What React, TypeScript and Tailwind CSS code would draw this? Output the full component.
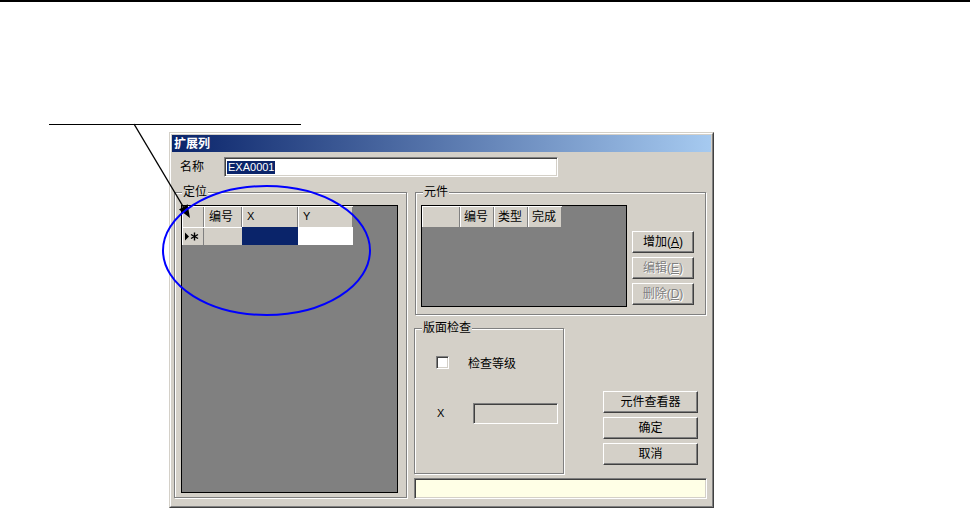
import React from "react";

const FONT = "font-['Liberation_Sans','Noto_Sans_CJK_SC',sans-serif]";

function Btn({
  children,
  className = "",
  disabled = false,
}: {
  children: React.ReactNode;
  className?: string;
  disabled?: boolean;
}) {
  return (
    <div
      className={`flex items-center justify-center h-[22px] bg-[#d4d0c8] border border-t-white border-l-white border-r-[#404040] border-b-[#404040] shadow-[inset_-1px_-1px_0_#808080] text-[12px] leading-none ${
        disabled ? "text-[#808080] [text-shadow:1px_1px_0_#fff]" : "text-black"
      } ${className}`}
    >
      {children}
    </div>
  );
}

function Group({
  label,
  className = "",
  children,
}: {
  label: string;
  className?: string;
  children?: React.ReactNode;
}) {
  return (
    <div
      className={`relative border border-[#808080] shadow-[inset_1px_1px_0_#fff,1px_1px_0_#fff] ${className}`}
    >
      <span className="absolute -top-[8px] left-[7px] bg-[#d4d0c8] px-[1px] text-[12px] leading-[14px] text-black">
        {label}
      </span>
      {children}
    </div>
  );
}

function HeadCell({
  w,
  children,
  pl = "pl-[5px]",
}: {
  w: string;
  children?: React.ReactNode;
  pl?: string;
}) {
  return (
    <div
      className={`${w} h-full flex items-center ${pl} bg-[#d4d0c8] shadow-[inset_1px_1px_0_#fff,inset_-1px_0_0_#808080] text-[12px] leading-none text-black`}
    >
      {children}
    </div>
  );
}

function RowMarker() {
  return (
    <svg width="14" height="9" viewBox="0 0 14 9">
      <polygon points="0,0.5 4,4.5 0,8.5" fill="#000" />
      <g stroke="#000" strokeWidth="1.4">
        <line x1="9.5" y1="0.5" x2="9.5" y2="8.5" />
        <line x1="6" y1="2.5" x2="13" y2="6.5" />
        <line x1="6" y1="6.5" x2="13" y2="2.5" />
      </g>
    </svg>
  );
}

const sunken =
  "border border-t-[#808080] border-l-[#808080] border-r-white border-b-white shadow-[inset_1px_1px_0_#404040,inset_-1px_-1px_0_#d4d0c8]";

export default function App() {
  return (
    <div className={`relative w-[970px] h-[508px] bg-white overflow-hidden ${FONT}`}>
      <div className="h-[2px] bg-black" />

      {/* Dialog */}
      <div className="ml-[169px] mt-[130px] w-[545px] h-[376px] border border-t-[#d4d0c8] border-l-[#d4d0c8] border-r-[#404040] border-b-[#404040] bg-[#d4d0c8]">
        <div className="h-full border border-t-white border-l-white border-r-[#808080] border-b-[#808080] p-[1px] flex flex-col">
          {/* Title bar */}
          <div className="h-[17px] flex items-center pl-[2px] bg-[linear-gradient(to_right,#0a246a,#a6caf0)]">
            <span className="text-white font-bold text-[12px] leading-none">扩展列</span>
          </div>

          {/* Name row */}
          <div className="mt-[5px] h-[20px] flex items-center pl-[8px]">
            <span className="w-[44px] text-[12px] leading-none text-black">名称</span>
            <div className={`w-[334px] h-[20px] bg-white ${sunken} flex items-center pl-[2px]`}>
              <span className="bg-[#0a246a] text-white text-[11px] leading-[13px] px-[1px]">EXA0001</span>
            </div>
          </div>

          {/* Main */}
          <div className="mt-[15px] flex items-start">
            {/* 定位 */}
            <Group label="定位" className="ml-[2px] w-[233px] h-[306px]">
              <div className="mt-[12px] ml-[6px] w-[217px] h-[288px] border border-black bg-[#808080]">
                <div className="flex h-[21px]">
                  <HeadCell w="w-[22px]" />
                  <HeadCell w="w-[38px]">编号</HeadCell>
                  <HeadCell w="w-[56px]">
                    <span className="text-[11px]">X</span>
                  </HeadCell>
                  <HeadCell w="w-[55px]">
                    <span className="text-[11px]">Y</span>
                  </HeadCell>
                </div>
                <div className="flex h-[18px]">
                  <div className="w-[22px] h-full flex items-center pl-[3px] bg-[#d4d0c8] shadow-[inset_1px_1px_0_#fff,inset_-1px_0_0_#808080]">
                    <RowMarker />
                  </div>
                  <div className="w-[38px] h-full bg-[#d4d0c8] shadow-[inset_0_1px_0_#fff]" />
                  <div className="w-[56px] h-full bg-[#0a246a]" />
                  <div className="w-[55px] h-full bg-white" />
                </div>
              </div>
            </Group>

            {/* Right column */}
            <div className="ml-[7px] w-[293px] flex flex-col">
              <Group label="元件" className="ml-[1px] w-[291px] h-[123px]">
                <div className="flex items-start">
                  <div className="mt-[12px] ml-[5px] w-[206px] h-[102px] border border-black bg-[#808080]">
                    <div className="flex h-[21px]">
                      <HeadCell w="w-[38px]" />
                      <HeadCell w="w-[34px]" pl="pl-[4px]">编号</HeadCell>
                      <HeadCell w="w-[34px]" pl="pl-[4px]">类型</HeadCell>
                      <HeadCell w="w-[34px]" pl="pl-[4px]">完成</HeadCell>
                    </div>
                  </div>
                  <div className="ml-[5px] mt-[38px] w-[62px] flex flex-col gap-[4px]">
                    <Btn>
                      增加(<span className="underline">A</span>)
                    </Btn>
                    <Btn disabled>
                      编辑(<span className="underline">E</span>)
                    </Btn>
                    <Btn disabled>
                      删除(<span className="underline">D</span>)
                    </Btn>
                  </div>
                </div>
              </Group>

              <div className="mt-[13px] flex items-start">
                <Group label="版面检查" className="w-[150px] h-[146px]">
                  <div className="mt-[25px] ml-[21px] flex items-center">
                    <div className={`w-[13px] h-[13px] bg-white ${sunken}`} />
                    <span className="ml-[19px] mt-[4px] text-[12px] leading-none text-black">检查等级</span>
                  </div>
                  <div className="mt-[33px] ml-[22px] flex items-center">
                    <span className="w-[36px] text-[11px] leading-none text-black">X</span>
                    <div className={`w-[85px] h-[21px] bg-[#d4d0c8] ${sunken}`} />
                  </div>
                </Group>
                <div className="ml-[39px] mt-[63px] w-[95px] flex flex-col gap-[4px]">
                  <Btn>元件查看器</Btn>
                  <Btn>确定</Btn>
                  <Btn>取消</Btn>
                </div>
              </div>

              <div className={`mt-[4px] w-[293px] h-[21px] bg-[#ffffe6] ${sunken}`} />
            </div>
          </div>
        </div>
      </div>

      {/* Annotation overlay */}
      <svg
        className="absolute left-0 top-0 pointer-events-none"
        width="970"
        height="508"
        viewBox="0 0 970 508"
      >
        <line x1="49" y1="124.5" x2="301" y2="124.5" stroke="#000" strokeWidth="1.2" />
        <line x1="134" y1="124" x2="184" y2="208" stroke="#000" strokeWidth="1.4" />
        <polygon points="190,218 187.6,204.2 179,209.4" fill="#000" />
        <ellipse
          cx="266.5"
          cy="250.5"
          rx="103.5"
          ry="64.5"
          fill="none"
          stroke="#0000ff"
          strokeWidth="2"
        />
      </svg>
    </div>
  );
}
